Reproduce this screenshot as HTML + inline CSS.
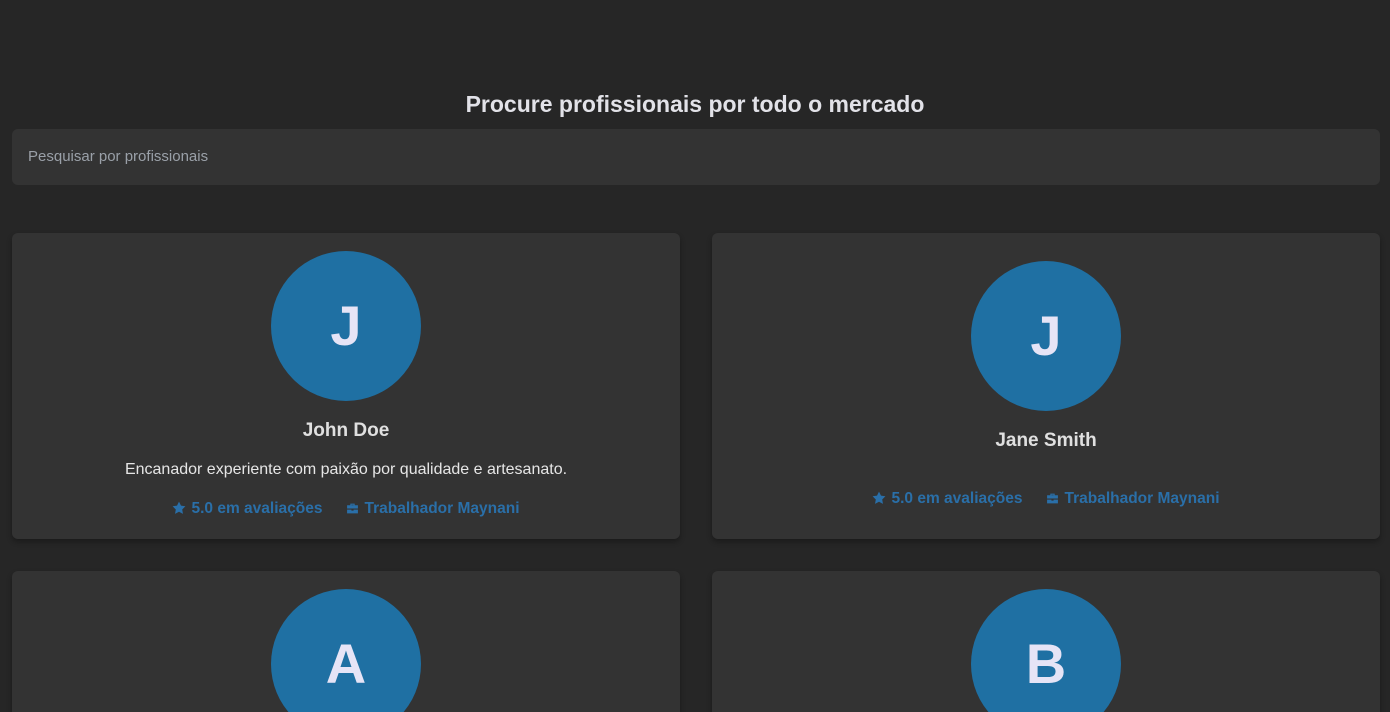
<!DOCTYPE html>
<html style="height:712px;overflow:hidden"><head><meta charset="utf-8"><style>
*{box-sizing:border-box;margin:0;padding:0}
body{width:1390px;height:712px;overflow:hidden;background:#262626;font-family:"Liberation Sans",sans-serif;position:relative}
h1{position:absolute;top:91px;left:0;width:1390px;text-align:center;color:#e2e2e8;font-size:23px;font-weight:bold}
.search{position:absolute;left:12px;top:129px;width:1368px;height:56px;background:#333;border-radius:6px;color:#9aa0a8;font-size:15px;padding:19px 16px}
.card{position:absolute;width:668px;height:306px;background:#333;border-radius:6px;box-shadow:0 3px 6px rgba(0,0,0,.3)}
.av{position:absolute;left:259px;width:150px;height:150px;border-radius:50%;background:#1f70a3;color:#e6e4f6;font-size:56px;font-weight:bold;text-align:center;line-height:150px}
.name{position:absolute;left:0;width:100%;text-align:center;color:#e0e0e0;font-size:19px;font-weight:bold}
.desc{position:absolute;left:0;width:100%;text-align:center;color:#e6e6e6;font-size:16px}
.meta{position:absolute;left:0;width:100%;text-align:center;color:#2a6fa8;font-size:15.5px;font-weight:bold}
.meta span{margin:0 12px}
svg{vertical-align:-2px;margin-right:5px}
</style></head><body>
<h1>Procure profissionais por todo o mercado</h1>
<div class="search">Pesquisar por profissionais</div>

<div class="card" style="left:12px;top:233px">
<div class="av" style="top:18px">J</div>
<div class="name" style="top:187px">John Doe</div>
<div class="desc" style="top:228px">Encanador experiente com paixão por qualidade e artesanato.</div>
<div class="meta" style="top:267px"><span><svg width="14" height="14" viewBox="0 0 24 24"><path fill="#2a6fa8" d="M12 1l3.4 7 7.6 1.1-5.5 5.4 1.3 7.6L12 18.5 5.2 22.1l1.3-7.6L1 9.1 8.6 8z"/></svg>5.0 em avaliações</span><span><svg width="13" height="13" viewBox="0 0 24 24"><path fill="#2a6fa8" d="M8 3h8v3h6v6H2V6h6zm2 2v1h4V5zM2 14h8v2h4v-2h8v7H2z"/></svg>Trabalhador Maynani</span></div>
</div>

<div class="card" style="left:712px;top:233px">
<div class="av" style="top:28px">J</div>
<div class="name" style="top:197px">Jane Smith</div>
<div class="meta" style="top:257px"><span><svg width="14" height="14" viewBox="0 0 24 24"><path fill="#2a6fa8" d="M12 1l3.4 7 7.6 1.1-5.5 5.4 1.3 7.6L12 18.5 5.2 22.1l1.3-7.6L1 9.1 8.6 8z"/></svg>5.0 em avaliações</span><span><svg width="13" height="13" viewBox="0 0 24 24"><path fill="#2a6fa8" d="M8 3h8v3h6v6H2V6h6zm2 2v1h4V5zM2 14h8v2h4v-2h8v7H2z"/></svg>Trabalhador Maynani</span></div>
</div>

<div class="card" style="left:12px;top:571px;height:141px;border-radius:6px 6px 0 0">
<div class="av" style="top:18px">A</div>
</div>
<div class="card" style="left:712px;top:571px;height:141px;border-radius:6px 6px 0 0">
<div class="av" style="top:18px">B</div>
</div>
</body></html>
